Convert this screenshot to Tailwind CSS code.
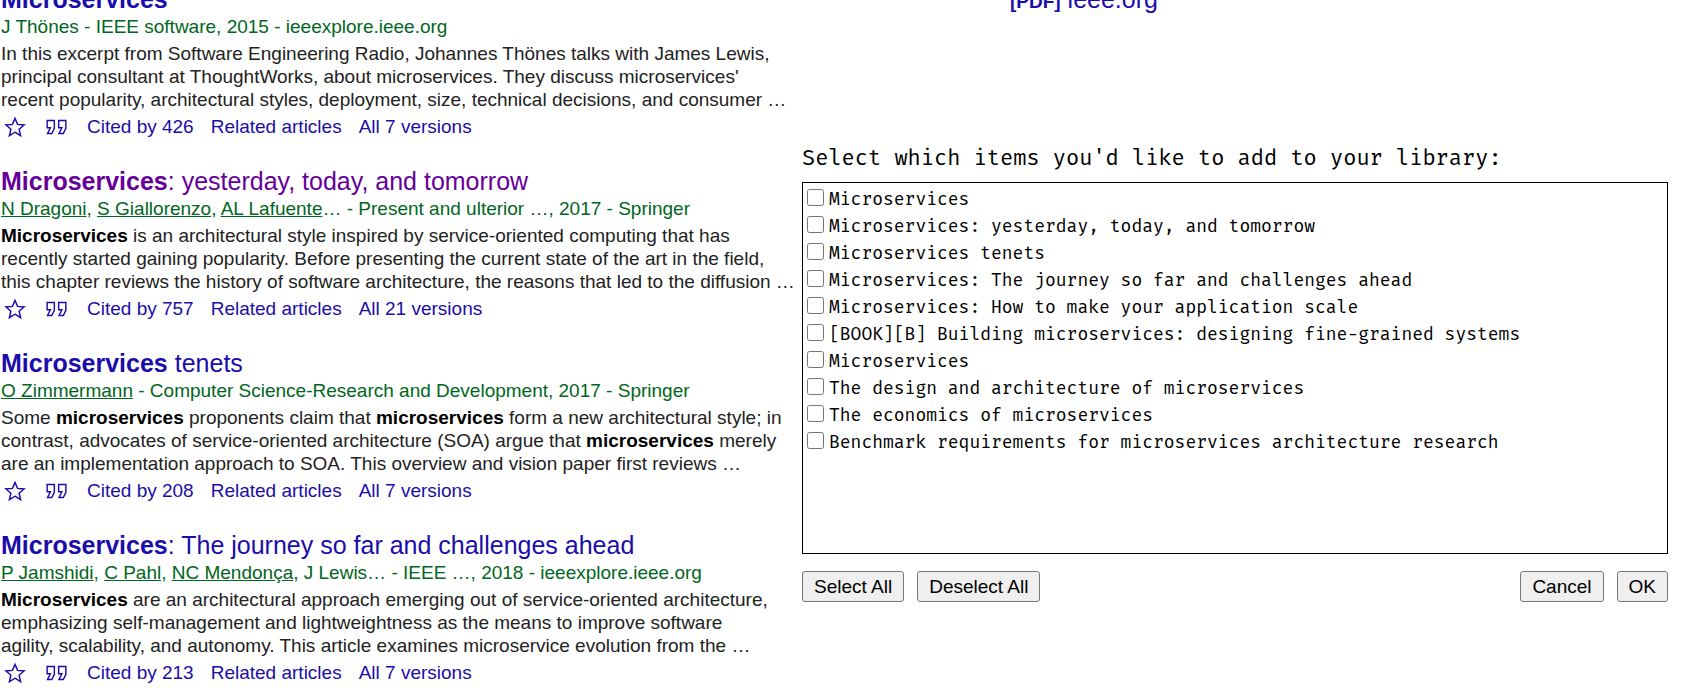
<!DOCTYPE html>
<html lang="en">
<head>
<meta charset="utf-8">
<title>Select items</title>
<script src="https://cdn.jsdelivr.net/npm/@tailwindcss/browser@4"></script>
</head>
<body class="overflow-hidden bg-white font-['Liberation_Sans',Arial,sans-serif] text-[19px]">
<svg class="hidden" aria-hidden="true">
  <symbol id="star" viewBox="0 0 15 16"><path d="M7.5 11.57l3.824 2.308-1.015-4.35 3.379-2.926-4.45-.378L7.5 2.122 5.761 6.224l-4.449.378 3.379 2.926-1.015 4.35z"/></symbol>
  <symbol id="quote" viewBox="0 0 16 16"><path d="M6.5 3.5H1.5V8.5H3.75L1.75 12.5H4.75L6.5 9V3.5zM14.5 3.5H9.5V8.5H11.75L9.75 12.5H12.75L14.5 9V3.5z"/></symbol>
</svg>
<div class="-mt-4 grid grid-cols-[802fr_886fr]">
  <main class="flex min-w-0 flex-col gap-[27px] pl-px whitespace-nowrap text-[#222222]">
    <article>
      <h3 class="text-[25px] leading-[31px] text-[#1a0dab]"><a href="#"><b>Microservices</b></a></h3>
      <div class="leading-6 text-[#006621]">J Thönes - IEEE software, 2015 - ieeexplore.ieee.org</div>
      <p class="mt-[3px] mb-1 leading-[23px]">In this excerpt from Software Engineering Radio, Johannes Thönes talks with James Lewis,<br>principal consultant at ThoughtWorks, about microservices. They discuss microservices'<br>recent popularity, architectural styles, deployment, size, technical decisions, and consumer …</p>
      <div class="flex gap-[17px] pl-[3px] leading-6 text-[#1a0dab]">
        <a href="#" aria-label="Save" class="mr-0.5"><svg class="h-6 w-[22px] fill-none stroke-current"><use href="#star"/></svg></a>
        <a href="#" aria-label="Cite" class="mr-0.5"><svg class="h-6 w-[23px] fill-none stroke-current"><use href="#quote"/></svg></a>
        <a href="#">Cited by 426</a><a href="#">Related articles</a><a href="#">All 7 versions</a>
      </div>
    </article>
    <article>
      <h3 class="text-[25px] leading-[31px] text-[#660099]"><a href="#"><b>Microservices</b>: yesterday, today, and tomorrow</a></h3>
      <div class="leading-6 text-[#006621]"><a href="#" class="underline">N Dragoni</a>, <a href="#" class="underline">S Giallorenzo</a>, <a href="#" class="underline">AL Lafuente</a>… - Present and ulterior …, 2017 - Springer</div>
      <p class="mt-[3px] mb-1 leading-[23px]"><b class="text-black">Microservices</b> is an architectural style inspired by service-oriented computing that has<br>recently started gaining popularity. Before presenting the current state of the art in the field,<br>this chapter reviews the history of software architecture, the reasons that led to the diffusion …</p>
      <div class="flex gap-[17px] pl-[3px] leading-6 text-[#1a0dab]">
        <a href="#" aria-label="Save" class="mr-0.5"><svg class="h-6 w-[22px] fill-none stroke-current"><use href="#star"/></svg></a>
        <a href="#" aria-label="Cite" class="mr-0.5"><svg class="h-6 w-[23px] fill-none stroke-current"><use href="#quote"/></svg></a>
        <a href="#">Cited by 757</a><a href="#">Related articles</a><a href="#">All 21 versions</a>
      </div>
    </article>
    <article>
      <h3 class="text-[25px] leading-[31px] text-[#1a0dab]"><a href="#"><b>Microservices</b> tenets</a></h3>
      <div class="leading-6 text-[#006621]"><a href="#" class="underline">O Zimmermann</a> - Computer Science-Research and Development, 2017 - Springer</div>
      <p class="mt-[3px] mb-1 leading-[23px]">Some <b class="text-black">microservices</b> proponents claim that <b class="text-black">microservices</b> form a new architectural style; in<br>contrast, advocates of service-oriented architecture (SOA) argue that <b class="text-black">microservices</b> merely<br>are an implementation approach to SOA. This overview and vision paper first reviews …</p>
      <div class="flex gap-[17px] pl-[3px] leading-6 text-[#1a0dab]">
        <a href="#" aria-label="Save" class="mr-0.5"><svg class="h-6 w-[22px] fill-none stroke-current"><use href="#star"/></svg></a>
        <a href="#" aria-label="Cite" class="mr-0.5"><svg class="h-6 w-[23px] fill-none stroke-current"><use href="#quote"/></svg></a>
        <a href="#">Cited by 208</a><a href="#">Related articles</a><a href="#">All 7 versions</a>
      </div>
    </article>
    <article>
      <h3 class="text-[25px] leading-[31px] text-[#1a0dab]"><a href="#"><b>Microservices</b>: The journey so far and challenges ahead</a></h3>
      <div class="leading-6 text-[#006621]"><a href="#" class="underline">P Jamshidi</a>, <a href="#" class="underline">C Pahl</a>, <a href="#" class="underline">NC Mendonça</a>, J Lewis… - IEEE …, 2018 - ieeexplore.ieee.org</div>
      <p class="mt-[3px] mb-1 leading-[23px]"><b class="text-black">Microservices</b> are an architectural approach emerging out of service-oriented architecture,<br>emphasizing self-management and lightweightness as the means to improve software<br>agility, scalability, and autonomy. This article examines microservice evolution from the …</p>
      <div class="flex gap-[17px] pl-[3px] leading-6 text-[#1a0dab]">
        <a href="#" aria-label="Save" class="mr-0.5"><svg class="h-6 w-[22px] fill-none stroke-current"><use href="#star"/></svg></a>
        <a href="#" aria-label="Cite" class="mr-0.5"><svg class="h-6 w-[23px] fill-none stroke-current"><use href="#quote"/></svg></a>
        <a href="#">Cited by 213</a><a href="#">Related articles</a><a href="#">All 7 versions</a>
      </div>
    </article>
  </main>
  <div class="min-w-0 pr-5">
    <a href="#" class="block pl-52 text-[25px] leading-[31px] text-[#1a0dab]"><b class="text-[19px] leading-none">[PDF]</b> ieee.org</a>
    <form class="mt-[128px] text-black">
      <h2 class="font-['Fira_Mono','Liberation_Mono',monospace] text-[22px] leading-[30px]">Select which items you'd like to add to your library:</h2>
      <div class="mt-[9px] min-h-[372px] border border-black px-1 pt-[3px] font-['Fira_Mono','Liberation_Mono',monospace] text-[18px] leading-[27px]">
        <label class="flex gap-[5px]"><input type="checkbox" class="mt-[3px] size-[17px] shrink-0">Microservices</label>
        <label class="flex gap-[5px]"><input type="checkbox" class="mt-[3px] size-[17px] shrink-0">Microservices: yesterday, today, and tomorrow</label>
        <label class="flex gap-[5px]"><input type="checkbox" class="mt-[3px] size-[17px] shrink-0">Microservices tenets</label>
        <label class="flex gap-[5px]"><input type="checkbox" class="mt-[3px] size-[17px] shrink-0">Microservices: The journey so far and challenges ahead</label>
        <label class="flex gap-[5px]"><input type="checkbox" class="mt-[3px] size-[17px] shrink-0">Microservices: How to make your application scale</label>
        <label class="flex gap-[5px]"><input type="checkbox" class="mt-[3px] size-[17px] shrink-0">[BOOK][B] Building microservices: designing fine-grained systems</label>
        <label class="flex gap-[5px]"><input type="checkbox" class="mt-[3px] size-[17px] shrink-0">Microservices</label>
        <label class="flex gap-[5px]"><input type="checkbox" class="mt-[3px] size-[17px] shrink-0">The design and architecture of microservices</label>
        <label class="flex gap-[5px]"><input type="checkbox" class="mt-[3px] size-[17px] shrink-0">The economics of microservices</label>
        <label class="flex gap-[5px]"><input type="checkbox" class="mt-[3px] size-[17px] shrink-0">Benchmark requirements for microservices architecture research</label>
      </div>
      <div class="mt-[17px] flex gap-[13px] leading-[29px]">
        <button type="button" class="rounded-[3px] border border-[#767676] bg-[#efefef] px-[11px]">Select All</button>
        <button type="button" class="rounded-[3px] border border-[#767676] bg-[#efefef] px-[11px]">Deselect All</button>
        <button type="button" class="ml-auto rounded-[3px] border border-[#767676] bg-[#efefef] px-[11px]">Cancel</button>
        <button type="button" class="rounded-[3px] border border-[#767676] bg-[#efefef] px-[11px]">OK</button>
      </div>
    </form>
  </div>
</div>
</body>
</html>
